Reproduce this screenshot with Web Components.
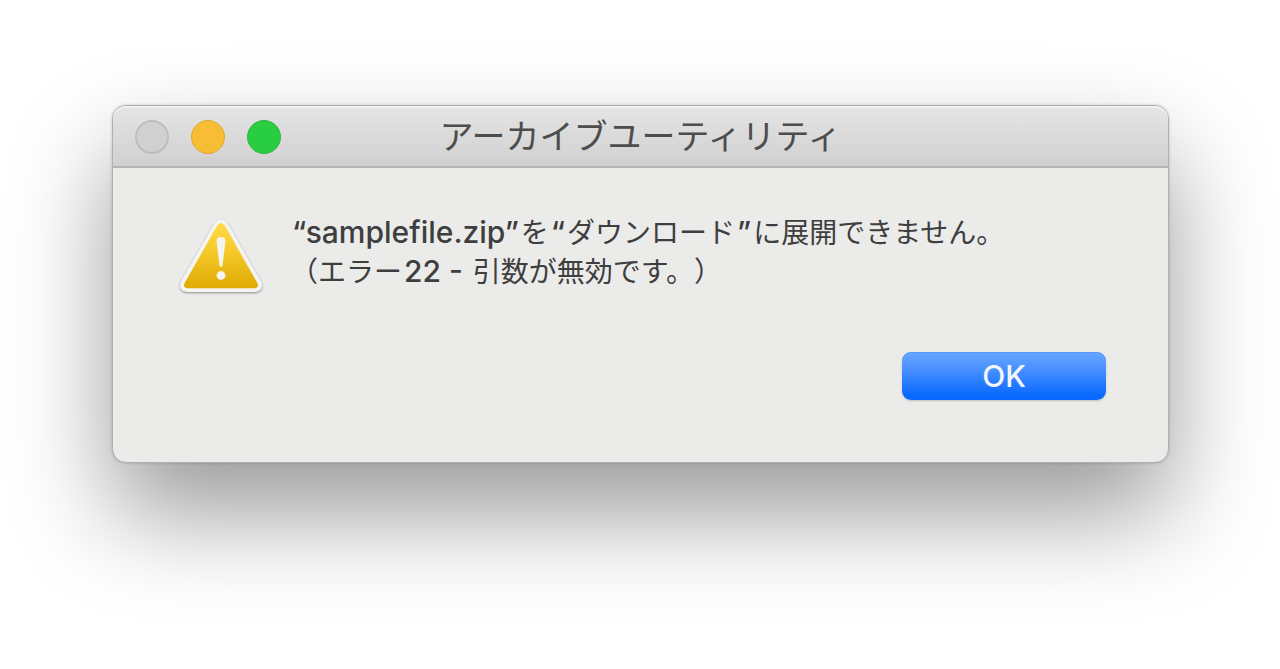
<!DOCTYPE html>
<html lang="ja">
<head>
<meta charset="utf-8">
<meta name="viewport" content="width=device-width, initial-scale=1">
<title>アーカイブユーティリティ</title>
<style>
  body {
    box-sizing: border-box;
    min-height: 100vh;
    margin: 0;
    padding: 105px 111px 105px 112px;
    background: #fff;
    color: #3e3e3e;
    font-family: Inter, "Noto Sans CJK JP", sans-serif;
  }
  .latin { margin: 0 2px; font-size: 30px; font-weight: 450; line-height: 1; }
</style>
</head>
<body>
<mac-window heading="アーカイブユーティリティ">
  <alert-message>
    <warning-icon slot="icon"></warning-icon>
    <span><span class="latin">“samplefile.zip”</span>を<span class="latin">“</span>ダウンロード<span class="latin">”</span>に展開できません。</span>
    <span>（エラー<span class="latin">22 - </span>引数が無効です。）</span>
  </alert-message>
  <push-button slot="actions">OK</push-button>
</mac-window>

<script>
class ShadowElement extends HTMLElement {
  constructor() {
    super();
    this.attachShadow({ mode: "open" }).innerHTML = this.constructor.markup;
  }
}

customElements.define("traffic-lights", class extends ShadowElement {
  static markup = `
    <style>
      :host { display: flex; gap: 22px; }
      button {
        box-sizing: border-box; width: 34px; height: 34px; padding: 0;
        border: 1px solid; border-radius: 50%;
      }
      .close { background: #d0d0d0; border: 2px solid #bdbdbd; }
      .minimize { background: #f7bd35; border-color: #dfa736; }
      .zoom { background: #29cd41; border-color: #30b543; }
    </style>
    <button class="close" type="button" aria-label="閉じる" disabled></button>
    <button class="minimize" type="button" aria-label="しまう"></button>
    <button class="zoom" type="button" aria-label="拡大"></button>`;
});

customElements.define("warning-icon", class extends ShadowElement {
  static markup = `
    <style>
      :host { display: block; }
      svg { display: block; overflow: visible; filter: drop-shadow(0 1px 1px #0006); }
    </style>
    <svg width="84" height="74" viewBox="0 0 84 76" preserveAspectRatio="none" role="img" aria-label="警告">
      <defs>
        <linearGradient id="gold" x1="0" y1="0" x2="0" y2="1">
          <stop offset="0" stop-color="#ffdb48"/>
          <stop offset=".4" stop-color="#f6cb2c"/>
          <stop offset="1" stop-color="#e0aa03"/>
        </linearGradient>
      </defs>
      <path d="M35.500 4Q42-3 48.500 4L82.500 65Q85 74 76 75H8Q-1 74 1.500 65Z" fill="#f4f4f3"/>
      <path d="M38 7Q42 1 46 7L78.500 66Q80 70.500 76 71H8Q4 70.500 5.500 66Z" fill="url(#gold)"/>
      <path d="M37.500 23Q37.500 18.500 42 18.500T46.500 23L43.500 48Q42 51 40.500 48Z" fill="#f5f4ee"/>
      <circle cx="42" cy="58" r="4.500" fill="#f5f4ee"/>
    </svg>`;
});

customElements.define("alert-message", class extends ShadowElement {
  static markup = `
    <style>
      :host { display: flex; align-items: flex-start; gap: 27px; }
      slot[name="icon"] { display: block; padding-top: 5px; }
      p { margin: 0; font-size: 28px; line-height: 39px; text-spacing-trim: space-all; }
      ::slotted(span) { display: block; }
    </style>
    <slot name="icon"></slot>
    <p><slot></slot></p>`;
});

customElements.define("push-button", class extends ShadowElement {
  static markup = `
    <style>
      :host { display: block; }
      button {
        display: block; width: 204px; height: 48px; padding: 0;
        border: 0; border-radius: 9px;
        background: linear-gradient(#69a5ff, #4a91ff 35%, #0a6aff 90%, #0568ff);
        box-shadow: 0 1px 2px #0003, inset 0 1px #5796f8;
        color: #f3f6fc; font: 500 30px/48px Inter, sans-serif;
      }
    </style>
    <button type="button"><slot></slot></button>`;
});

customElements.define("mac-window", class extends ShadowElement {
  static markup = `
    <style>
      :host {
        display: block; border: 1px solid #b0b0b0; border-radius: 14px;
        background: #ebebea;
        box-shadow: 0 0 3px #0003, 0 50px 100px #0006;
      }
      header {
        display: grid; grid-template-columns: 1fr auto 1fr; align-items: center;
        box-sizing: border-box; height: 62px; padding: 2px 22px 0;
        border-bottom: 2px solid #b4b4b4; border-radius: 13px 13px 0 0;
        background: linear-gradient(#e5e5e5, #d0d0d0);
        box-shadow: inset 0 2px #f0f0f0;
      }
      h1 { margin: 0; color: #4d4d4d; font-size: 34px; font-weight: 400; line-height: 40px; }
      main { padding: 46px 66px 0; }
      footer { display: flex; justify-content: flex-end; padding: 59px 62px 62px; }
    </style>
    <header><traffic-lights></traffic-lights><h1></h1></header>
    <main><slot></slot></main>
    <footer><slot name="actions"></slot></footer>`;

  connectedCallback() {
    this.shadowRoot.querySelector("h1").textContent = this.getAttribute("heading");
  }
});
</script>
</body>
</html>
